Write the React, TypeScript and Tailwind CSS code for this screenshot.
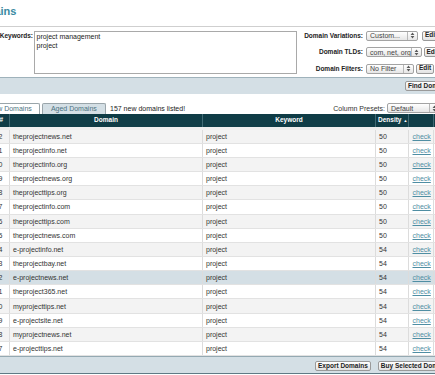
import React from "react";

const rows: [string, string, string][] = [
  ["152", "theprojectnews.net", "50"],
  ["151", "theprojectinfo.net", "50"],
  ["150", "theprojectinfo.org", "50"],
  ["149", "theprojectnews.org", "50"],
  ["148", "theprojecttips.org", "50"],
  ["147", "theprojectinfo.com", "50"],
  ["146", "theprojecttips.com", "50"],
  ["145", "theprojectnews.com", "50"],
  ["144", "e-projectinfo.net", "54"],
  ["143", "theprojectbay.net", "54"],
  ["142", "e-projectnews.net", "54"],
  ["141", "theproject365.net", "54"],
  ["140", "myprojecttips.net", "54"],
  ["139", "e-projectsite.net", "54"],
  ["138", "myprojectnews.net", "54"],
  ["137", "e-projecttips.net", "54"],
];

function Arrows() {
  return (
    <svg width="5" height="7" viewBox="0 0 5 7">
      <path d="M2.5 0.6 L4.4 2.9 L0.6 2.9 Z M2.5 6.4 L4.4 4.1 L0.6 4.1 Z" fill="#5a5a5a" />
    </svg>
  );
}

function Select({ className, text }: { className: string; text: string }) {
  return (
    <div
      className={`flex h-[10px] items-stretch overflow-hidden rounded-[2px] border border-[#a3a3a3] bg-gradient-to-b from-white to-[#e6e6e6] text-[7px] leading-none text-[#444] ${className}`}
    >
      <span className="flex flex-1 items-center whitespace-nowrap pl-[3px]">{text}</span>
      <span className="flex w-[10px] items-center justify-center border-l border-[#b8b8b8]">
        <Arrows />
      </span>
    </div>
  );
}

function Btn({ className = "", children }: { className?: string; children: React.ReactNode }) {
  return (
    <div
      className={`flex h-[10px] items-center whitespace-nowrap rounded-[2px] border border-[#9a9a9a] bg-gradient-to-b from-white to-[#e2e2e2] px-[2px] text-[6.5px] font-bold leading-none text-[#222] ${className}`}
    >
      {children}
    </div>
  );
}

const cols = "grid grid-cols-[30px_193px_173px_33px_25px_40px]";

export default function App() {
  return (
    <div className="h-[375px] w-[435px] overflow-hidden bg-white font-['Liberation_Sans',Arial,sans-serif]">
      <div className="-ml-[30px] w-[520px]">
        {/* Title */}
        <div className="h-[27px] border-b border-[#cfcfcf] pt-[5px]">
          <div className="text-[11px] font-bold leading-[12px] text-[#3a8aa2]">Domains</div>
        </div>

        {/* Form */}
        <div className="mt-[3.5px] flex items-start">
          <div className="w-[64px] pr-[1px] text-right text-[6.5px] font-bold leading-[9px] text-[#222]">
            Keywords:
          </div>
          <textarea
            readOnly
            defaultValue={"project management\nproject"}
            className="h-[43px] w-[263px] resize-none overflow-hidden border border-[#a9a9a9] px-[1.5px] py-0 text-[7px] leading-[9px] text-[#222] outline-none"
          />
          <div className="flex flex-col gap-[6.6px]">
            <div className="flex h-[10px] items-center">
              <div className="w-[66px] text-right text-[6.5px] font-bold text-[#222]">Domain Variations:</div>
              <Select className="ml-[3px] w-[52px]" text="Custom..." />
              <Btn className="ml-[4px]">Edit</Btn>
            </div>
            <div className="flex h-[10px] items-center">
              <div className="w-[66px] text-right text-[6.5px] font-bold text-[#222]">Domain TLDs:</div>
              <Select className="ml-[3px] w-[55.5px]" text="com, net, org" />
              <Btn className="ml-[2px]">Edit</Btn>
            </div>
            <div className="flex h-[10px] items-center">
              <div className="w-[66px] text-right text-[6.5px] font-bold text-[#222]">Domain Filters:</div>
              <Select className="ml-[3px] w-[47.5px]" text="No Filter" />
              <Btn className="ml-[2.5px]">Edit</Btn>
            </div>
          </div>
        </div>

        {/* Bar */}
        <div className="mt-[3.5px] flex h-[17px] items-center border-t border-[#9fb2bb] bg-[#d4dfe5]">
          <Btn className="ml-[435px]">Find Domains</Btn>
        </div>

        {/* Tabs row */}
        <div className="ml-[10px] flex h-[20px] w-[460px] items-end">
          <div className="flex h-[11.5px] w-[60px] items-center justify-center rounded-t-[2px] border border-b-0 border-[#9aa5aa] bg-white text-[7px] leading-none text-[#4b7282]">
            New Domains
          </div>
          <div className="ml-[1.7px] flex h-[11.5px] w-[64.3px] items-center justify-center rounded-t-[2px] border border-b-0 border-[#9aa5aa] bg-[#d4dfe5] text-[7px] leading-none text-[#4b7282]">
            Aged Domains
          </div>
          <div className="ml-[4px] flex h-[11.5px] items-center text-[7px] leading-none text-[#222]">
            157 new domains listed!
          </div>
          <div className="mb-[1px] ml-auto flex h-[10px] items-center">
            <div className="w-[52px] text-right text-[7px] leading-none text-[#333]">Column Presets:</div>
            <Select className="ml-[2px] w-[53px]" text="Default" />
          </div>
        </div>

        {/* Table */}
        <div className="ml-[10px]">
          <div className={`${cols} h-[13px] bg-[#0f3c46] text-[6.5px] font-bold leading-none text-white`}>
            <div className="flex items-center justify-end border-r border-[#406a74] pr-[6px]">#</div>
            <div className="flex items-center justify-center border-r border-[#406a74]">Domain</div>
            <div className="flex items-center justify-center border-r border-[#406a74]">Keyword</div>
            <div className="flex items-center border-r border-[#406a74] pl-[2px]">
              Density <span className="ml-[2px] text-[4px]">▲</span>
            </div>
            <div className="border-r border-[#406a74]"></div>
            <div></div>
          </div>
          <div className="h-[2.4px] bg-[#ededed]"></div>
          {rows.map(([n, d, den], i) => {
            const bg = i === 10 ? "bg-[#d4dfe5]" : i % 2 === 0 ? "bg-[#f3f3f3]" : "bg-white";
            return (
              <div
                key={n}
                className={`${cols} h-[14.17px] border-b border-[#e2e2e2] text-[7px] leading-none text-[#333] ${bg}`}
              >
                <div className="flex items-center justify-end border-r border-[#dcdcdc] pr-[6.5px]">{n}</div>
                <div className="flex items-center border-r border-[#dcdcdc] pl-[3px]">{d}</div>
                <div className="flex items-center border-r border-[#dcdcdc] pl-[3px]">project</div>
                <div className="flex items-center border-r border-[#dcdcdc] pl-[3px]">{den}</div>
                <div className="flex items-center border-r border-[#dcdcdc] pl-[3.5px]">
                  <span className="text-[#4f8ea3] underline">check</span>
                </div>
                <div></div>
              </div>
            );
          })}
        </div>

        {/* Footer */}
        <div className="flex h-[18px] items-center border-y border-t-[#94a9b2] border-b-[#5f7a85] bg-[#d4dfe5] pt-[1.5px]">
          <Btn className="ml-[345px]">Export Domains</Btn>
          <Btn className="ml-[7px]">Buy Selected Domains</Btn>
        </div>
      </div>
    </div>
  );
}
